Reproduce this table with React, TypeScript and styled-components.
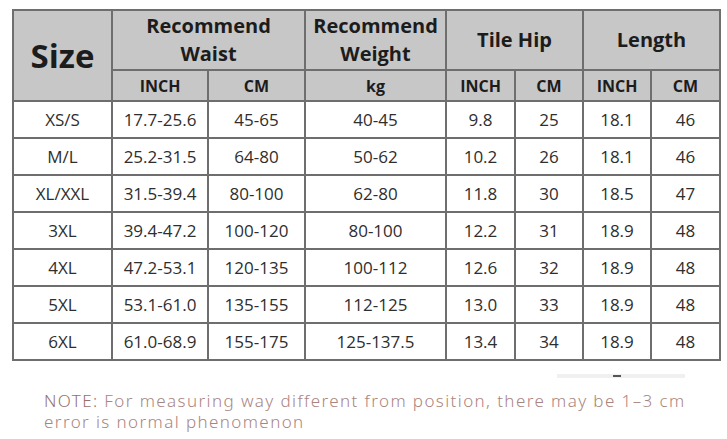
import styled, { createGlobalStyle } from 'styled-components';

const GlobalStyle = createGlobalStyle`
  html, body {
    margin: 0;
    padding: 0;
    background: #ffffff;
  }
`;

const Page = styled.div`
  width: 727px;
  height: 439px;
  padding: 9px 0 0 12px;
  box-sizing: border-box;
  display: flex;
  flex-direction: column;
  font-family: 'Open Sans', 'Noto Sans', sans-serif;
  color: #2b2b2b;
`;

const SizeTable = styled.table`
  border-collapse: collapse;
  table-layout: fixed;
  width: 707px;
`;

const HeadCell = styled.th<{ $size?: number; $height?: number }>`
  background: #c7c7c7;
  border: 2px solid #6e6e6e;
  font-weight: 700;
  font-size: ${({ $size }) => $size ?? 20}px;
  line-height: 28px;
  height: ${({ $height }) => $height ?? 58}px;
  padding: 0;
  text-align: center;
  color: #1c1c1c;
`;

const BodyCell = styled.td`
  border: 2px solid #6e6e6e;
  height: 35px;
  padding: 0;
  font-size: 17px;
  text-align: center;
  color: #2e2e2e;
`;

const Divider = styled.div`
  margin: 13px 0 0 545px;
  width: 128px;
  height: 4px;
  background: #f0f0f0;
  position: relative;
  &::after {
    content: '';
    position: absolute;
    left: 56px;
    top: 1px;
    width: 8px;
    height: 2px;
    background: #555;
  }
`;

const Note = styled.div`
  margin: 12px 0 0 32px;
  display: flex;
  flex-direction: column;
  font-family: 'Noto Sans', 'Open Sans', sans-serif;
  font-weight: 300;
  font-size: 17px;
  letter-spacing: 1.4px;
  white-space: nowrap;
  color: #a9857f;
`;

const NoteLine = styled.span`
  display: block;
  height: 21px;
  line-height: 21px;
`;

const NoteLabel = styled.span`
  color: #967069;
`;

const widths = [99, 96, 97, 141, 69, 68, 68, 69];

const rows = [
  ['XS/S', '17.7-25.6', '45-65', '40-45', '9.8', '25', '18.1', '46'],
  ['M/L', '25.2-31.5', '64-80', '50-62', '10.2', '26', '18.1', '46'],
  ['XL/XXL', '31.5-39.4', '80-100', '62-80', '11.8', '30', '18.5', '47'],
  ['3XL', '39.4-47.2', '100-120', '80-100', '12.2', '31', '18.9', '48'],
  ['4XL', '47.2-53.1', '120-135', '100-112', '12.6', '32', '18.9', '48'],
  ['5XL', '53.1-61.0', '135-155', '112-125', '13.0', '33', '18.9', '48'],
  ['6XL', '61.0-68.9', '155-175', '125-137.5', '13.4', '34', '18.9', '48'],
];

const subHeads = ['INCH', 'CM', 'kg', 'INCH', 'CM', 'INCH', 'CM'];

export default function App() {
  return (
    <>
      <GlobalStyle />
      <Page>
        <SizeTable>
          <colgroup>
            {widths.map((w, i) => (
              <col key={i} style={{ width: w }} />
            ))}
          </colgroup>
          <thead>
            <tr>
              <HeadCell rowSpan={2} $size={33}>Size</HeadCell>
              <HeadCell colSpan={2}>Recommend<br />Waist</HeadCell>
              <HeadCell>Recommend<br />Weight</HeadCell>
              <HeadCell colSpan={2}>Tile Hip</HeadCell>
              <HeadCell colSpan={2}>Length</HeadCell>
            </tr>
            <tr>
              {subHeads.map((s, i) => (
                <HeadCell key={i} $size={16} $height={29}>{s}</HeadCell>
              ))}
            </tr>
          </thead>
          <tbody>
            {rows.map((r) => (
              <tr key={r[0]}>
                {r.map((c, i) => (
                  <BodyCell key={i}>{c}</BodyCell>
                ))}
              </tr>
            ))}
          </tbody>
        </SizeTable>
        <Divider />
        <Note>
          <NoteLine>
            <NoteLabel>NOTE:</NoteLabel> For measuring way different from position, there may be 1–3 cm
          </NoteLine>
          <NoteLine>error is normal phenomenon</NoteLine>
        </Note>
      </Page>
    </>
  );
}
